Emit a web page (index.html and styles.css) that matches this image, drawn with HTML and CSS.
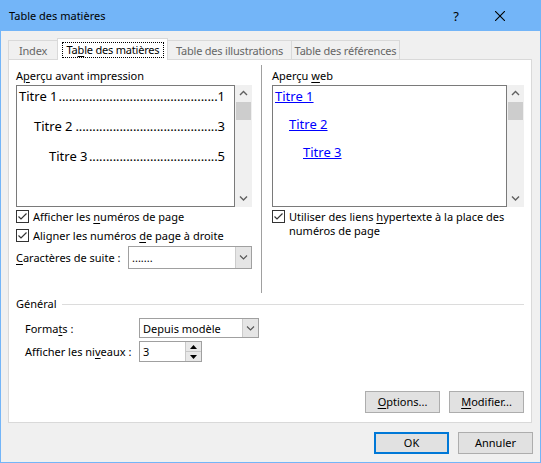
FILE: index.html
```html
<!DOCTYPE html>
<html lang="fr">
<head>
<meta charset="utf-8">
<title>Table des matières</title>
<link rel="stylesheet" href="styles.css">
</head>
<body>
<div class="window">
  <div class="titlebar">
    <span class="title">Table des matières</span>
    <span class="help">?</span>
    <svg class="close" width="10" height="10" viewBox="0 0 10 10"><path d="M0 0L10 10M10 0L0 10" stroke="#000" stroke-width="1.1" fill="none"/></svg>
  </div>
  <div class="client">
    <div class="tabs">
      <div class="tab tab-index">Index</div>
      <div class="tab tab-active"><span class="focus">Ta<u>b</u>le des matières</span></div>
      <div class="tab tab-illus">Table des illustrations</div>
      <div class="tab tab-refs">Table des références</div>
    </div>
    <div class="panel">
      <div class="columns">
        <div class="col col-left">
          <div class="label">A<u>p</u>erçu avant impression</div>
          <div class="preview">
            <div class="preview-box">
              <div class="toc-line"><span>Titre 1</span><span class="dots">...............................................</span><span>1</span></div>
              <div class="toc-line lvl2"><span>Titre 2</span><span class="dots">..........................................</span><span>3</span></div>
              <div class="toc-line lvl3"><span>Titre 3</span><span class="dots">......................................</span><span>5</span></div>
            </div>
            <div class="scrollbar">
              <svg class="sb-btn" width="17" height="17" viewBox="0 0 17 17"><path d="M5 10L8.5 6.5L12 10" stroke="#606060" stroke-width="1.4" fill="none"/></svg>
              <div class="thumb"></div>
              <div class="sb-track"></div>
              <svg class="sb-btn" width="17" height="17" viewBox="0 0 17 17"><path d="M5 6.5L8.5 10L12 6.5" stroke="#606060" stroke-width="1.4" fill="none"/></svg>
            </div>
          </div>
          <div class="check">
            <svg class="cb" width="13" height="13" viewBox="0 0 13 13"><rect x="0.5" y="0.5" width="12" height="12" fill="#fff" stroke="#333"/><path d="M2.5 6.5L5 9L10.5 3.5" stroke="#333" stroke-width="1.2" fill="none"/></svg>
            <span>Afficher les <u>n</u>uméros de page</span>
          </div>
          <div class="check">
            <svg class="cb" width="13" height="13" viewBox="0 0 13 13"><rect x="0.5" y="0.5" width="12" height="12" fill="#fff" stroke="#333"/><path d="M2.5 6.5L5 9L10.5 3.5" stroke="#333" stroke-width="1.2" fill="none"/></svg>
            <span>Aligner les numéros <u>d</u>e page à droite</span>
          </div>
          <div class="field-row">
            <span class="field-label"><u>C</u>aractères de suite :</span>
            <div class="combo combo-suite">
              <span class="combo-text">.......</span>
              <span class="combo-btn"><svg width="9" height="5" viewBox="0 0 9 5"><path d="M1 0.5L4.5 4L8 0.5" stroke="#555" stroke-width="1.1" fill="none"/></svg></span>
            </div>
          </div>
        </div>
        <div class="vsep"></div>
        <div class="col col-right">
          <div class="label">Aperçu <u>w</u>eb</div>
          <div class="preview">
            <div class="preview-box web">
              <div class="web-line"><a>Titre 1</a></div>
              <div class="web-line lvl2w"><a>Titre 2</a></div>
              <div class="web-line lvl3w"><a>Titre 3</a></div>
            </div>
            <div class="scrollbar">
              <svg class="sb-btn" width="17" height="17" viewBox="0 0 17 17"><path d="M5 10L8.5 6.5L12 10" stroke="#606060" stroke-width="1.4" fill="none"/></svg>
              <div class="thumb"></div>
              <div class="sb-track"></div>
              <svg class="sb-btn" width="17" height="17" viewBox="0 0 17 17"><path d="M5 6.5L8.5 10L12 6.5" stroke="#606060" stroke-width="1.4" fill="none"/></svg>
            </div>
          </div>
          <div class="check check-multi">
            <svg class="cb" width="13" height="13" viewBox="0 0 13 13"><rect x="0.5" y="0.5" width="12" height="12" fill="#fff" stroke="#333"/><path d="M2.5 6.5L5 9L10.5 3.5" stroke="#333" stroke-width="1.2" fill="none"/></svg>
            <span>Utiliser des liens <u>h</u>ypertexte à la place des numéros de page</span>
          </div>
        </div>
      </div>
      <div class="group-head"><span>Général</span><span class="hline"></span></div>
      <div class="general">
        <div class="grow grow-formats">
          <span class="glabel">Forma<u>t</u>s :</span>
          <div class="combo combo-formats">
            <span class="combo-text">Depuis modèle</span>
            <span class="combo-btn"><svg width="9" height="5" viewBox="0 0 9 5"><path d="M1 0.5L4.5 4L8 0.5" stroke="#555" stroke-width="1.1" fill="none"/></svg></span>
          </div>
        </div>
        <div class="grow grow-levels">
          <span class="glabel">Afficher les ni<u>v</u>eaux :</span>
          <div class="spin">
            <span class="spin-text">3</span>
            <span class="spin-btns">
              <span class="spin-half"><svg width="7" height="4" viewBox="0 0 7 4"><path d="M0 4L3.5 0L7 4Z" fill="#000"/></svg></span>
              <span class="spin-half spin-lower"><svg width="7" height="4" viewBox="0 0 7 4"><path d="M0 0L3.5 4L7 0Z" fill="#000"/></svg></span>
            </span>
          </div>
        </div>
      </div>
      <div class="panel-buttons">
        <button class="btn"><span><u>O</u>ptions...</span></button>
        <button class="btn"><span><u>M</u>odifier...</span></button>
      </div>
    </div>
    <div class="dialog-buttons">
      <button class="btn btn-default">OK</button>
      <button class="btn">Annuler</button>
    </div>
  </div>
</div>
</body>
</html>
```

FILE: styles.css
```css
* { box-sizing: border-box; }
html, body { margin: 0; padding: 0; }
body {
  width: 541px;
  height: 463px;
  overflow: hidden;
  font-family: "Noto Sans", "Segoe UI", sans-serif;
  font-size: 11px;
  color: #000;
  background: #f0f0f0;
}
u { text-decoration: underline; text-decoration-thickness: 1px; text-underline-offset: 2px; }

.window {
  width: 541px;
  height: 463px;
  background: #73b5f8;
  padding: 0 1px 1px;
  display: flex;
  flex-direction: column;
}
.titlebar {
  height: 31px;
  flex: none;
  display: flex;
  align-items: center;
  padding: 0 35px 0 8px;
}
.title { line-height: 16px; }
.help { margin-left: auto; width: 10px; text-align: center; font-size: 13px; line-height: 16px; }
.close { margin-left: 34px; display: block; }

.client {
  flex: 1;
  background: #f0f0f0;
  padding: 7px 8px 0 7px;
  display: flex;
  flex-direction: column;
}

.tabs { height: 21px; flex: none; display: flex; align-items: flex-end; }
.tab {
  height: 19px;
  border: 1px solid #d9d9d9;
  border-bottom: none;
  background: #f0f0f0;
  color: #666;
  line-height: 17px;
  padding-top: 1px;
  text-align: center;
  white-space: nowrap;
  letter-spacing: -0.2px;
  overflow: hidden;
}
.tab-index { width: 49px; border-right: none; }
.tab-active {
  width: 111px;
  height: 22px;
  margin-bottom: -1px;
  background: #fff;
  color: #000;
  position: relative;
  z-index: 1;
  padding: 3px 3px 0 4px;
}
.focus { display: block; height: 16px; border: 1px dotted #000; line-height: 14px; }
.tab-illus { width: 124px; border-left: none; }
.tab-refs { width: 108px; border-left: none; }

.panel {
  height: 364px;
  flex: none;
  background: #fff;
  border: 1px solid #d9d9d9;
  padding: 0 7px 9px;
  display: flex;
  flex-direction: column;
}
.columns { margin-top: 5px; height: 228px; flex: none; display: flex; }
.col-left { width: 236px; }
.col-right { width: 252px; }
.vsep { width: 1px; background: #a0a0a0; margin: 0 10px 0 9px; }

.label { margin-top: 3px; height: 15px; line-height: 15px; margin-bottom: 2px; white-space: nowrap; }
.preview { display: flex; height: 122px; }
.preview-box {
  flex: 1;
  min-width: 0;
  border: 1px solid #7a7a7a;
  background: #fff;
  padding: 0 9px 0 2px;
  overflow: hidden;
}
.toc-line {
  display: flex;
  height: 20px;
  line-height: 20px;
  margin-bottom: 10px;
  font-size: 13px;
  white-space: nowrap;
}
.lvl2 { padding-left: 15px; }
.lvl3 { padding-left: 30px; }
.dots { flex: 1; min-width: 0; overflow: hidden; text-align: right; letter-spacing: -0.1px; }

.web-line { height: 20px; line-height: 20px; margin-bottom: 8px; font-size: 13px; white-space: nowrap; }
.web-line a { color: #0000ff; text-decoration: underline; text-decoration-thickness: 1px; }
.lvl2w { padding-left: 14px; }
.lvl3w { padding-left: 28px; }

.scrollbar { width: 17px; flex: none; background: #f0f0f0; display: flex; flex-direction: column; }
.sb-btn { display: block; flex: none; }
.thumb { height: 18px; margin: 0 1px; background: #cdcdcd; flex: none; }
.sb-track { flex: 1; }

.check { display: flex; align-items: center; height: 19px; white-space: nowrap; }
.cb { display: block; flex: none; margin-right: 4px; }
.check-multi { align-items: flex-start; height: auto; margin-top: 3px; line-height: 14px; white-space: normal; }

.field-row { display: flex; align-items: center; margin-top: 1px; height: 23px; }
.field-label { width: 112px; flex: none; white-space: nowrap; }
.combo { display: flex; border: 1px solid #a0a0a0; background: #fff; }
.combo-suite { width: 124px; height: 23px; }
.combo-text { flex: 1; padding-left: 3px; display: flex; align-items: center; white-space: nowrap; }
.combo-btn {
  width: 16px;
  flex: none;
  background: #e5e5e5;
  border-left: 1px solid #cccccc;
  display: flex;
  align-items: center;
  justify-content: center;
}
.combo-btn svg { display: block; }

.group-head { display: flex; align-items: center; margin-top: 3px; height: 16px; line-height: 16px; flex: none; }
.hline { flex: 1; height: 1px; background: #dcdcdc; margin-left: 5px; }

.general { padding-left: 9px; }
.grow { display: flex; align-items: center; }
.grow-formats { margin-top: 6px; height: 20px; }
.grow-levels { margin-top: 3px; height: 21px; }
.glabel { width: 114px; flex: none; white-space: nowrap; }
.combo-formats { width: 120px; height: 20px; }
.spin { width: 63px; height: 21px; display: flex; border: 1px solid #a0a0a0; background: #fff; }
.spin-text { flex: 1; padding-left: 3px; display: flex; align-items: center; }
.spin-btns { width: 16px; flex: none; display: flex; flex-direction: column; border-left: 1px solid #c8c8c8; }
.spin-half { flex: 1; background: #e8e8e8; display: flex; align-items: center; justify-content: center; }
.spin-lower { border-top: 1px solid #c8c8c8; }
.spin-half svg { display: block; }

.panel-buttons { margin-top: auto; display: flex; justify-content: flex-end; gap: 9px; }
.btn {
  width: 75px;
  height: 22px;
  padding: 0;
  font: inherit;
  color: #000;
  background: #e1e1e1;
  border: 1px solid #adadad;
  line-height: 18px;
  text-align: center;
}
.dialog-buttons { display: flex; justify-content: flex-end; gap: 9px; margin-top: 9px; margin-right: -1px; }
.btn-default { border: 2px solid #0078d7; }
```
